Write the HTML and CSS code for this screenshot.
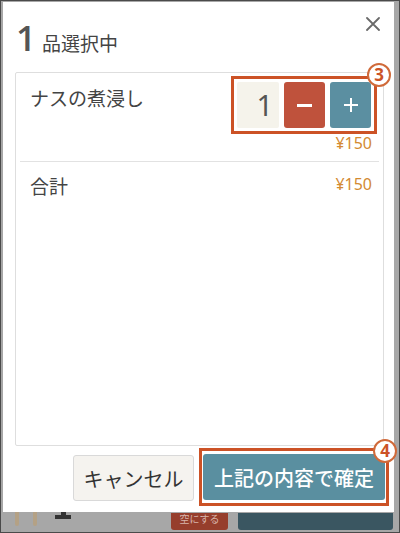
FILE: index.html
```html
<!DOCTYPE html>
<html lang="ja">
<head>
<meta charset="utf-8">
<title>品選択中</title>
<link rel="stylesheet" href="styles.css">
</head>
<body>
<div class="screen">
  <div class="modal">
    <div class="header">
      <div class="title"><span class="count">1</span><span class="title-text">品選択中</span></div>
      <button class="close" aria-label="閉じる">
        <svg width="14" height="14" viewBox="0 0 14 14"><path d="M1 1 L13 13 M13 1 L1 13" stroke="#6a6a6a" stroke-width="1.8" fill="none" stroke-linecap="round"/></svg>
      </button>
    </div>
    <div class="list">
      <div class="row item">
        <div class="name">ナスの煮浸し</div>
        <div class="right">
          <div class="qty">
            <div class="qty-num">1</div>
            <button class="qty-btn minus" aria-label="減らす"><span class="bar-h"></span></button>
            <button class="qty-btn plus" aria-label="増やす">
              <svg width="16" height="16" viewBox="0 0 16 16"><path d="M8 1 V15 M1 8 H15" stroke="#fff" stroke-width="2" fill="none"/></svg>
            </button>
            <span class="badge badge-3">3</span>
          </div>
          <div class="price">¥150</div>
        </div>
      </div>
      <div class="sep"></div>
      <div class="row total">
        <div class="name">合計</div>
        <div class="price total-price">¥150</div>
      </div>
    </div>
    <div class="footer">
      <button class="btn cancel">キャンセル</button>
      <div class="confirm-wrap">
        <button class="btn confirm">上記の内容で確定</button>
        <span class="badge badge-4">4</span>
      </div>
    </div>
  </div>
  <div class="behind">
    <span class="bar"></span>
    <span class="bar"></span>
    <span class="digit"><span class="stem"></span><span class="base"></span></span>
    <span class="clear-btn">空にする</span>
    <span class="checkout"></span>
  </div>
</div>
</body>
</html>
```

FILE: styles.css
```css
* { box-sizing: border-box; }
html, body { margin: 0; padding: 0; }
body {
  width: 400px;
  height: 533px;
  overflow: hidden;
  font-family: "Noto Sans CJK JP", "Noto Sans", sans-serif;
  color: #444;
}
button { font-family: inherit; cursor: pointer; }

.screen {
  width: 400px;
  height: 533px;
  border: 1px solid #4a4a4a;
  background: #a7a7a7;
  display: flex;
  flex-direction: column;
}

.modal {
  margin: 1px 5px 0 2px;
  height: 510px;
  background: #fff;
  padding: 0 10px 0 12px;
  position: relative;
  display: flex;
  flex-direction: column;
}

.header {
  height: 70px;
  display: flex;
  justify-content: space-between;
  align-items: flex-start;
}
.title {
  padding-top: 16px;
  padding-left: 1px;
  display: flex;
  align-items: baseline;
  line-height: 40px;
}
.count {
  font-size: 35px;
  font-weight: 600;
  color: #555;
  font-family: "Open Sans", "Noto Sans", sans-serif;
}
.title-text {
  font-size: 19px;
  margin-left: 6px;
  color: #444;
}
.close {
  margin-top: 15px;
  margin-right: 4px;
  width: 14px;
  height: 14px;
  padding: 0;
  border: 0;
  background: none;
  display: flex;
}

.list {
  height: 374px;
  border: 1px solid #dedede;
  border-radius: 2px;
}
.row {
  display: flex;
  justify-content: space-between;
  align-items: flex-start;
}
.name {
  font-size: 19px;
  line-height: 27px;
  color: #444;
  padding-left: 14px;
}
.item { padding-bottom: 9px; }
.item .name { padding-top: 11px; }
.right {
  margin-top: 3px;
  margin-right: 6px;
  display: flex;
  flex-direction: column;
  align-items: flex-end;
}
.qty {
  position: relative;
  display: flex;
  gap: 5px;
  padding: 3px;
  border: 3px solid #cc5226;
}
.qty-num {
  width: 42px;
  height: 46px;
  background: #f5f3eb;
  border-radius: 2px;
  font-family: "Noto Sans", sans-serif;
  font-size: 29px;
  line-height: 46px;
  color: #555;
  text-align: right;
  padding-right: 6px;
}
.qty-btn {
  width: 41px;
  height: 46px;
  border: 0;
  border-radius: 3px;
  padding: 0;
  display: flex;
  align-items: center;
  justify-content: center;
}
.minus { background: #bf523c; }
.plus { background: #5b8fa1; }
.bar-h {
  width: 15px;
  height: 3px;
  background: #fff;
}
.price {
  font-family: "Noto Sans", sans-serif;
  font-size: 16px;
  line-height: 18px;
  color: #d38a32;
  margin-top: 0;
  margin-right: 5px;
}
.sep {
  height: 1px;
  background: #e2e2e2;
  margin: 0 4px;
}
.total .name { padding-top: 10px; }
.total-price {
  margin-top: 13px;
  margin-right: 11px;
}

.badge {
  position: absolute;
  width: 24px;
  height: 24px;
  border-radius: 50%;
  background: #fff;
  border: 2px solid #d06a3a;
  color: #cc5226;
  font-family: "Noto Sans", sans-serif;
  font-weight: 700;
  font-size: 17px;
  line-height: 20px;
  text-align: center;
}
.badge-3 { top: -16px; right: -17px; }
.badge-4 { top: -12px; right: -11px; }

.footer {
  margin-top: 2px;
  margin-right: -5px;
  display: flex;
  justify-content: flex-end;
  align-items: center;
  gap: 5px;
}
.btn {
  height: 46px;
  font-size: 20px;
  border-radius: 3px;
  padding: 0;
}
.cancel {
  width: 121px;
  margin-top: 2px;
  background: #f5f3ef;
  border: 1px solid #d9d9d9;
  color: #333;
}
.confirm-wrap {
  position: relative;
  border: 3px solid #cc5226;
  padding: 3px 1px;
  display: flex;
}
.confirm {
  width: 182px;
  background: #5a8fa0;
  border: 0;
  color: #fff;
  font-weight: 500;
}

.behind {
  flex: 1;
  display: flex;
  align-items: flex-start;
  padding-left: 14px;
}
.bar {
  width: 4px;
  height: 14px;
  background: #b4a185;
  border-radius: 0 0 2px 2px;
}
.bar + .bar { margin-left: 14px; }
.digit {
  margin-left: 18px;
  display: flex;
  flex-direction: column;
  align-items: center;
}
.stem { width: 5px; height: 3px; background: #333; }
.base { width: 16px; height: 4px; background: #333; }
.clear-btn {
  margin-left: auto;
  margin-top: 1px;
  width: 57px;
  height: 17px;
  background: #963e2c;
  color: #d8b4aa;
  font-size: 10px;
  line-height: 12px;
  text-align: center;
  border-radius: 0 0 3px 3px;
}
.checkout {
  margin-left: 10px;
  margin-right: 6px;
  margin-top: 1px;
  width: 155px;
  height: 17px;
  background: #3a5661;
  border-radius: 0 0 3px 3px;
}
```
